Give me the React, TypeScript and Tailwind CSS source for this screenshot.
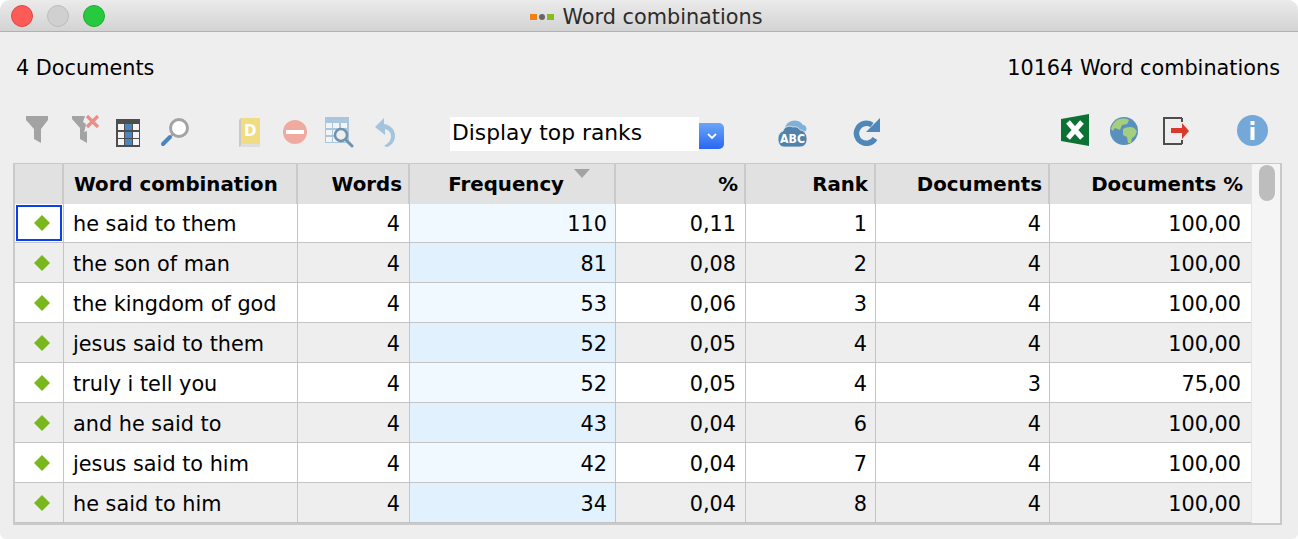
import React from 'react';

const rows = [
  ['he said to them', '4', '110', '0,11', '1', '4', '100,00'],
  ['the son of man', '4', '81', '0,08', '2', '4', '100,00'],
  ['the kingdom of god', '4', '53', '0,06', '3', '4', '100,00'],
  ['jesus said to them', '4', '52', '0,05', '4', '4', '100,00'],
  ['truly i tell you', '4', '52', '0,05', '4', '3', '75,00'],
  ['and he said to', '4', '43', '0,04', '6', '4', '100,00'],
  ['jesus said to him', '4', '42', '0,04', '7', '4', '100,00'],
  ['he said to him', '4', '34', '0,04', '8', '4', '100,00'],
];

const gridCols = 'grid grid-cols-[49px_234px_112px_206px_130px_130px_174px_201px]';

function Funnel({ crossed }: { crossed?: boolean }) {
  if (crossed) {
    return (
      <svg width="28" height="29" viewBox="0 0 28 29" className="ml-[23px]">
        <path d="M0 1h13l-2 6 3 2-1 5-1 3 3-1v12l-7-4V13L0 4z" fill="#a3a3a3" />
        <path d="M15 1l11 11M26 1L15 12" stroke="#ee8c8c" strokeWidth="3.4" />
      </svg>
    );
  }
  return (
    <svg width="23" height="28" viewBox="0 0 23 28" className="ml-[25px] mt-[1px]">
      <path d="M0 0h22v4l-7 9v14l-7-4V13L0 4z" fill="#a3a3a3" />
    </svg>
  );
}

function GridIcon() {
  return (
    <svg width="24" height="28" viewBox="0 0 24 28" className="ml-[16px] mt-[4px]">
      <rect y="0" width="24" height="28" fill="#4d4d4d" />
      {[5, 13, 20].map((y) =>
        [2, 9, 17].map((x) => (
          <rect key={`${x}-${y}`} x={x} y={y} width={x === 9 ? 7 : 6} height="6" fill={x === 9 ? '#4a86bd' : '#f4f4f4'} />
        )),
      )}
    </svg>
  );
}

function Magnifier() {
  return (
    <svg width="30" height="30" viewBox="0 0 30 30" className="ml-[20px] mt-[2px]">
      <circle cx="19" cy="11" r="8.5" fill="#fff" stroke="#a3a3a3" strokeWidth="3" />
      <path d="M12.5 17.5l-1 1" stroke="#a3a3a3" strokeWidth="3" />
      <path d="M10 20L3 27" stroke="#4a86bd" strokeWidth="4" strokeLinecap="round" />
    </svg>
  );
}

function BookIcon() {
  return (
    <svg width="21" height="30" viewBox="0 0 21 30" className="ml-[49px] mt-[3px]">
      <path d="M0 2l2-2v28l-2 1z" fill="#c9c9c9" />
      <rect x="2" y="0" width="19" height="26" fill="#f0dc82" />
      <rect x="2" y="26" width="19" height="3" fill="#dedede" />
      <text x="5" y="18" fontSize="15" fontWeight="600" fill="#fff" fontFamily="'DejaVu Sans', sans-serif">D</text>
    </svg>
  );
}

function MinusIcon() {
  return (
    <svg width="24" height="24" viewBox="0 0 24 24" className="ml-[23px] mt-[5px]">
      <circle cx="12" cy="12" r="12" fill="#f0aaa0" />
      <rect x="3" y="10" width="18" height="4" fill="#fff" />
    </svg>
  );
}

function TableSearch() {
  return (
    <svg width="30" height="31" viewBox="0 0 30 31" className="ml-[18px] mt-[2px]">
      <rect width="24" height="26" fill="#a9c6de" />
      {[6, 13, 20].map((y) =>
        [1, 8, 16].map((x) => <rect key={`${x}-${y}`} x={x} y={y} width="6" height="5" fill="#f4f4f4" />),
      )}
      <circle cx="16" cy="18" r="6" fill="#eeeeee" stroke="#6f93af" strokeWidth="2.5" />
      <path d="M21 23l6 6" stroke="#6f93af" strokeWidth="3" strokeLinecap="round" />
    </svg>
  );
}

function UndoIcon() {
  return (
    <svg width="21" height="30" viewBox="0 0 21 30" className="ml-[20px] mt-[3px]">
      <path d="M0 9L9 0v6c7 1 11 6 11 12 0 5-3 9-8 11l-3-1c5-3 7-6 7-10 0-3-2-6-6-7v6z" fill="#a3c4dc" />
    </svg>
  );
}

function AbcCloud() {
  return (
    <svg width="30" height="28" viewBox="0 0 30 28" className="ml-[53px] mt-[4px]">
      <path d="M8 9c1-6 8-9 13-7 3 1 4 3 5 4 3 0 4 3 3 6l-4 1H8z" fill="#7eb0da" />
      <path d="M1 20c0-4 2-7 5-8 1-4 6-6 10-4 3-1 6 1 7 3 4 0 7 4 7 9 0 5-3 8-7 8H7c-4 0-6-4-6-8z" fill="#4f83ad" stroke="#eeeeee" strokeWidth="0.8" />
      <text x="15.5" y="24" textAnchor="middle" fontSize="12" fontWeight="700" fill="#fff" textLength="25" lengthAdjust="spacingAndGlyphs" fontFamily="'DejaVu Sans', sans-serif">ABC</text>
    </svg>
  );
}

function RefreshIcon() {
  return (
    <svg width="28" height="28" viewBox="0 0 28 28" className="ml-[46px] mt-[3px]">
      <path d="M22 20.5A10 10 0 1 1 19 7" fill="none" stroke="#4f88b8" strokeWidth="5.5" />
      <path d="M27 0v14H13z" fill="#4f88b8" />
    </svg>
  );
}

function ExcelIcon() {
  return (
    <svg width="28" height="32" viewBox="0 0 28 32" className="ml-[180px] -mt-[1px]">
      <path d="M0 5L28 0v32L0 27z" fill="#0b7233" />
      <path d="M7 8l14 16M21 8L7 24" stroke="#fff" strokeWidth="5" />
    </svg>
  );
}

function GlobeIcon() {
  return (
    <svg width="28" height="28" viewBox="0 0 28 28" className="ml-[21px] mt-[2px]">
      <circle cx="14" cy="14" r="14" fill="#5b8fbc" />
      <path d="M7 3c4-2 9-2 12 0l-2 4-5 1-2 5-5-2-2 3-2-2C2 8 4 5 7 3z" fill="#a4cf7e" />
      <path d="M13 12c3-2 8-3 11-1l3 3-2 5-3 2-1 5-3 0-1-6-4-2z" fill="#a4cf7e" />
    </svg>
  );
}

function ExitIcon() {
  return (
    <svg width="26" height="28" viewBox="0 0 26 28" className="ml-[25px] mt-[2px]">
      <path d="M19 1H1v26h18" fill="none" stroke="#4d4d4d" strokeWidth="2" />
      <path d="M19 1v4M19 23v4" stroke="#4d4d4d" strokeWidth="2" />
      <path d="M8 11h11V6l7 8-7 8v-6H8z" fill="#d93a2b" />
    </svg>
  );
}

function InfoIcon() {
  return (
    <svg width="31" height="31" viewBox="0 0 31 31" className="ml-[48px]">
      <circle cx="15.5" cy="15.5" r="15.5" fill="#74a8d8" />
      <rect x="13.5" y="6" width="4" height="4" fill="#fff" />
      <rect x="13.5" y="12" width="4" height="13" fill="#fff" />
    </svg>
  );
}

function Diamond() {
  return (
    <svg width="16" height="16" viewBox="0 0 16 16">
      <path d="M8 0l8 8-8 8-8-8z" fill="#78b81e" />
    </svg>
  );
}

export default function App() {
  return (
    <div className="w-[1298px] h-[539px] overflow-hidden bg-white font-['DejaVu_Sans',sans-serif] text-black">
      <div className="h-full rounded-t-[10px] rounded-b-[6px] overflow-hidden bg-[#eeeeee] flex flex-col">
        {/* Title bar */}
        <div className="relative h-[32px] shrink-0 flex items-center justify-center pt-[3px] pr-[5px] border-b border-[#b1b1b1] bg-gradient-to-b from-[#ebebeb] to-[#d3d3d3]">
          <div className="absolute left-[11px] top-[5px] flex gap-[14px]">
            <div className="w-[22px] h-[22px] rounded-full bg-[#fc5b57] border border-[#e2463f]" />
            <div className="w-[22px] h-[22px] rounded-full bg-[#d0d0d0] border border-[#bcbcbc]" />
            <div className="w-[22px] h-[22px] rounded-full bg-[#27c93f] border border-[#1dad2b]" />
          </div>
          <div className="flex items-center gap-[8px] text-[20.8px] leading-none text-[#2c2c2c]">
            <span className="flex items-center gap-[2px]">
              <span className="w-[7px] h-[6px] bg-[#f08018]" />
              <span className="w-[6px] h-[6px] rounded-full bg-[#666666]" />
              <span className="w-[7px] h-[6px] bg-[#84bd1c]" />
            </span>
            <span>Word combinations</span>
          </div>
        </div>

        {/* Counts */}
        <div className="flex justify-between pl-[16px] pr-[18px] pt-[24px] text-[20.8px] leading-[24px]">
          <span>4 Documents</span>
          <span>10164 Word combinations</span>
        </div>

        {/* Toolbar */}
        <div className="flex items-start h-[36px] mt-[35px] pl-[1px]">
          <Funnel />
          <Funnel crossed />
          <GridIcon />
          <Magnifier />
          <BookIcon />
          <MinusIcon />
          <TableSearch />
          <UndoIcon />
          <div className="ml-[54px] mt-[2px] flex items-start">
            <div className="w-[249px] h-[34px] bg-white pl-[2px] text-[21.8px] leading-[31px]">Display top ranks</div>
            <div className="w-[25px] h-[26px] mt-[6px] rounded-r-[5px] bg-gradient-to-b from-[#6ca5f8] to-[#2a66f0] flex items-center justify-center">
              <svg width="10" height="6" viewBox="0 0 10 6">
                <path d="M1 1l4 4 4-4" fill="none" stroke="#fff" strokeWidth="1.8" />
              </svg>
            </div>
          </div>
          <AbcCloud />
          <RefreshIcon />
          <ExcelIcon />
          <GlobeIcon />
          <ExitIcon />
          <InfoIcon />
        </div>

        {/* Table */}
        <div className="mt-[12px] ml-[13px] w-[1269px] h-[362px] border-2 border-t border-[#c9c9c9] flex bg-[#f4f4f4]">
          <div className="w-[1236px] shrink-0">
            <div className={`${gridCols} grid-rows-[40px] h-[40px] bg-[#e1e1e1] font-bold text-[19.8px] leading-[42px]`}>
              <div className="border-r-2 border-[#cacaca]" />
              <div className="border-r-2 border-[#cacaca] pl-[10px]">Word combination</div>
              <div className="border-r-2 border-[#cacaca] text-right pr-[6px]">Words</div>
              <div className="relative border-r-2 border-[#cacaca] text-right pr-[50px]">
                Frequency
                <span className="absolute right-[24px] top-[5px] w-0 h-0 border-x-[8px] border-x-transparent border-t-[9px] border-t-[#a3a3a3]" />
              </div>
              <div className="border-r-2 border-[#cacaca] text-right pr-[6px]">%</div>
              <div className="border-r-2 border-[#cacaca] text-right pr-[6px]">Rank</div>
              <div className="border-r-2 border-[#cacaca] text-right pr-[6px]">Documents</div>
              <div className="text-right pr-[8px]">Documents %</div>
            </div>
            {rows.map((r, i) => {
              const odd = i % 2 === 1;
              return (
                <div
                  key={i}
                  className={`${gridCols} ${i === 0 ? 'h-[39px] grid-rows-[38px] leading-[41px]' : 'h-[40px] grid-rows-[39px] leading-[42px]'} border-b border-[#c4c4c4] text-[20.8px] ${
                    odd ? 'bg-[#eeeeee]' : 'bg-white'
                  }`}
                >
                  <div className={`flex border-r border-[#c4c4c4] ${i === 0 ? 'pl-[1px] pr-[1px] py-[1px]' : ''}`}>
                    <div className={`flex flex-1 items-center justify-center pl-[5px] ${i === 0 ? 'border-2 border-[#0c3ff0]' : ''}`}>
                      <Diamond />
                    </div>
                  </div>
                  <div className="border-r border-[#c4c4c4] pl-[9px]">{r[0]}</div>
                  <div className="border-r border-[#c4c4c4] text-right pr-[9px]">{r[1]}</div>
                  <div className={`border-r border-[#c4c4c4] text-right pr-[8px] ${odd ? 'bg-[#e1f1fe]' : 'bg-[#f0f9ff]'}`}>{r[2]}</div>
                  <div className="border-r border-[#c4c4c4] text-right pr-[9px]">{r[3]}</div>
                  <div className="border-r border-[#c4c4c4] text-right pr-[8px]">{r[4]}</div>
                  <div className="border-r border-[#c4c4c4] text-right pr-[8px]">{r[5]}</div>
                  <div className="text-right pr-[10px]">{r[6]}</div>
                </div>
              );
            })}
          </div>
          <div className="flex-1 pt-[1px] pl-[7px] border-l border-[#e4e4e4] bg-[#f5f5f5]">
            <div className="w-[16px] h-[36px] rounded-full bg-[#bdbdbd]" />
          </div>
        </div>
      </div>
    </div>
  );
}
